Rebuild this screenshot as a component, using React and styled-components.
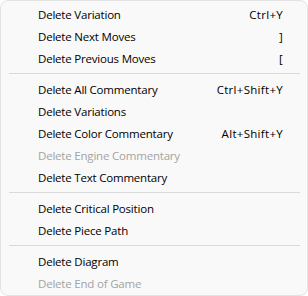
import styled, { createGlobalStyle } from "styled-components";

const Global = createGlobalStyle`
  html, body {
    margin: 0;
    padding: 0;
    background: #ffffff;
  }
`;

// Painel do menu
const Menu = styled.div`
  box-sizing: border-box;
  width: 308px;
  height: 296px;
  padding: 2px 0 3px;
  background: #f9f9f9;
  border: 1px solid #e3e3e3;
  border-radius: 8px;
  font-family: "Segoe UI", "Open Sans", "Liberation Sans", sans-serif;
  font-size: 11.5px;
  letter-spacing: -0.2px;
  display: flex;
  flex-direction: column;
`;

// Linha do menu
const Item = styled.div`
  height: 22px;
  display: flex;
  align-items: center;
  justify-content: space-between;
  padding: 0 24px 0 37px;
  color: ${(p) => (p.$disabled ? "#a3a3a3" : "#000000")};
`;

// Atalho de teclado
const Shortcut = styled.span`
  color: inherit;
  letter-spacing: 0.3px;
`;

// Separador
const Sep = styled.div`
  height: 9px;
  display: flex;
  align-items: center;
  padding: 0 7px 0 8px;

  &::before {
    content: "";
    flex: 1;
    height: 1px;
    background: #d9d9d9;
  }
`;

const groups = [
  [
    ["Delete Variation", "Ctrl+Y"],
    ["Delete Next Moves", "]"],
    ["Delete Previous Moves", "["],
  ],
  [
    ["Delete All Commentary", "Ctrl+Shift+Y"],
    ["Delete Variations"],
    ["Delete Color Commentary", "Alt+Shift+Y"],
    ["Delete Engine Commentary", null, true],
    ["Delete Text Commentary"],
  ],
  [["Delete Critical Position"], ["Delete Piece Path"]],
  [["Delete Diagram"], ["Delete End of Game", null, true]],
];

export default function App() {
  return (
    <>
      <Global />
      <Menu>
        {groups.map((g, gi) => (
          <div key={gi}>
            {gi > 0 && <Sep />}
            {g.map(([label, key, disabled]) => (
              <Item key={label} $disabled={disabled}>
                <span>{label}</span>
                {key && <Shortcut>{key}</Shortcut>}
              </Item>
            ))}
          </div>
        ))}
      </Menu>
    </>
  );
}
